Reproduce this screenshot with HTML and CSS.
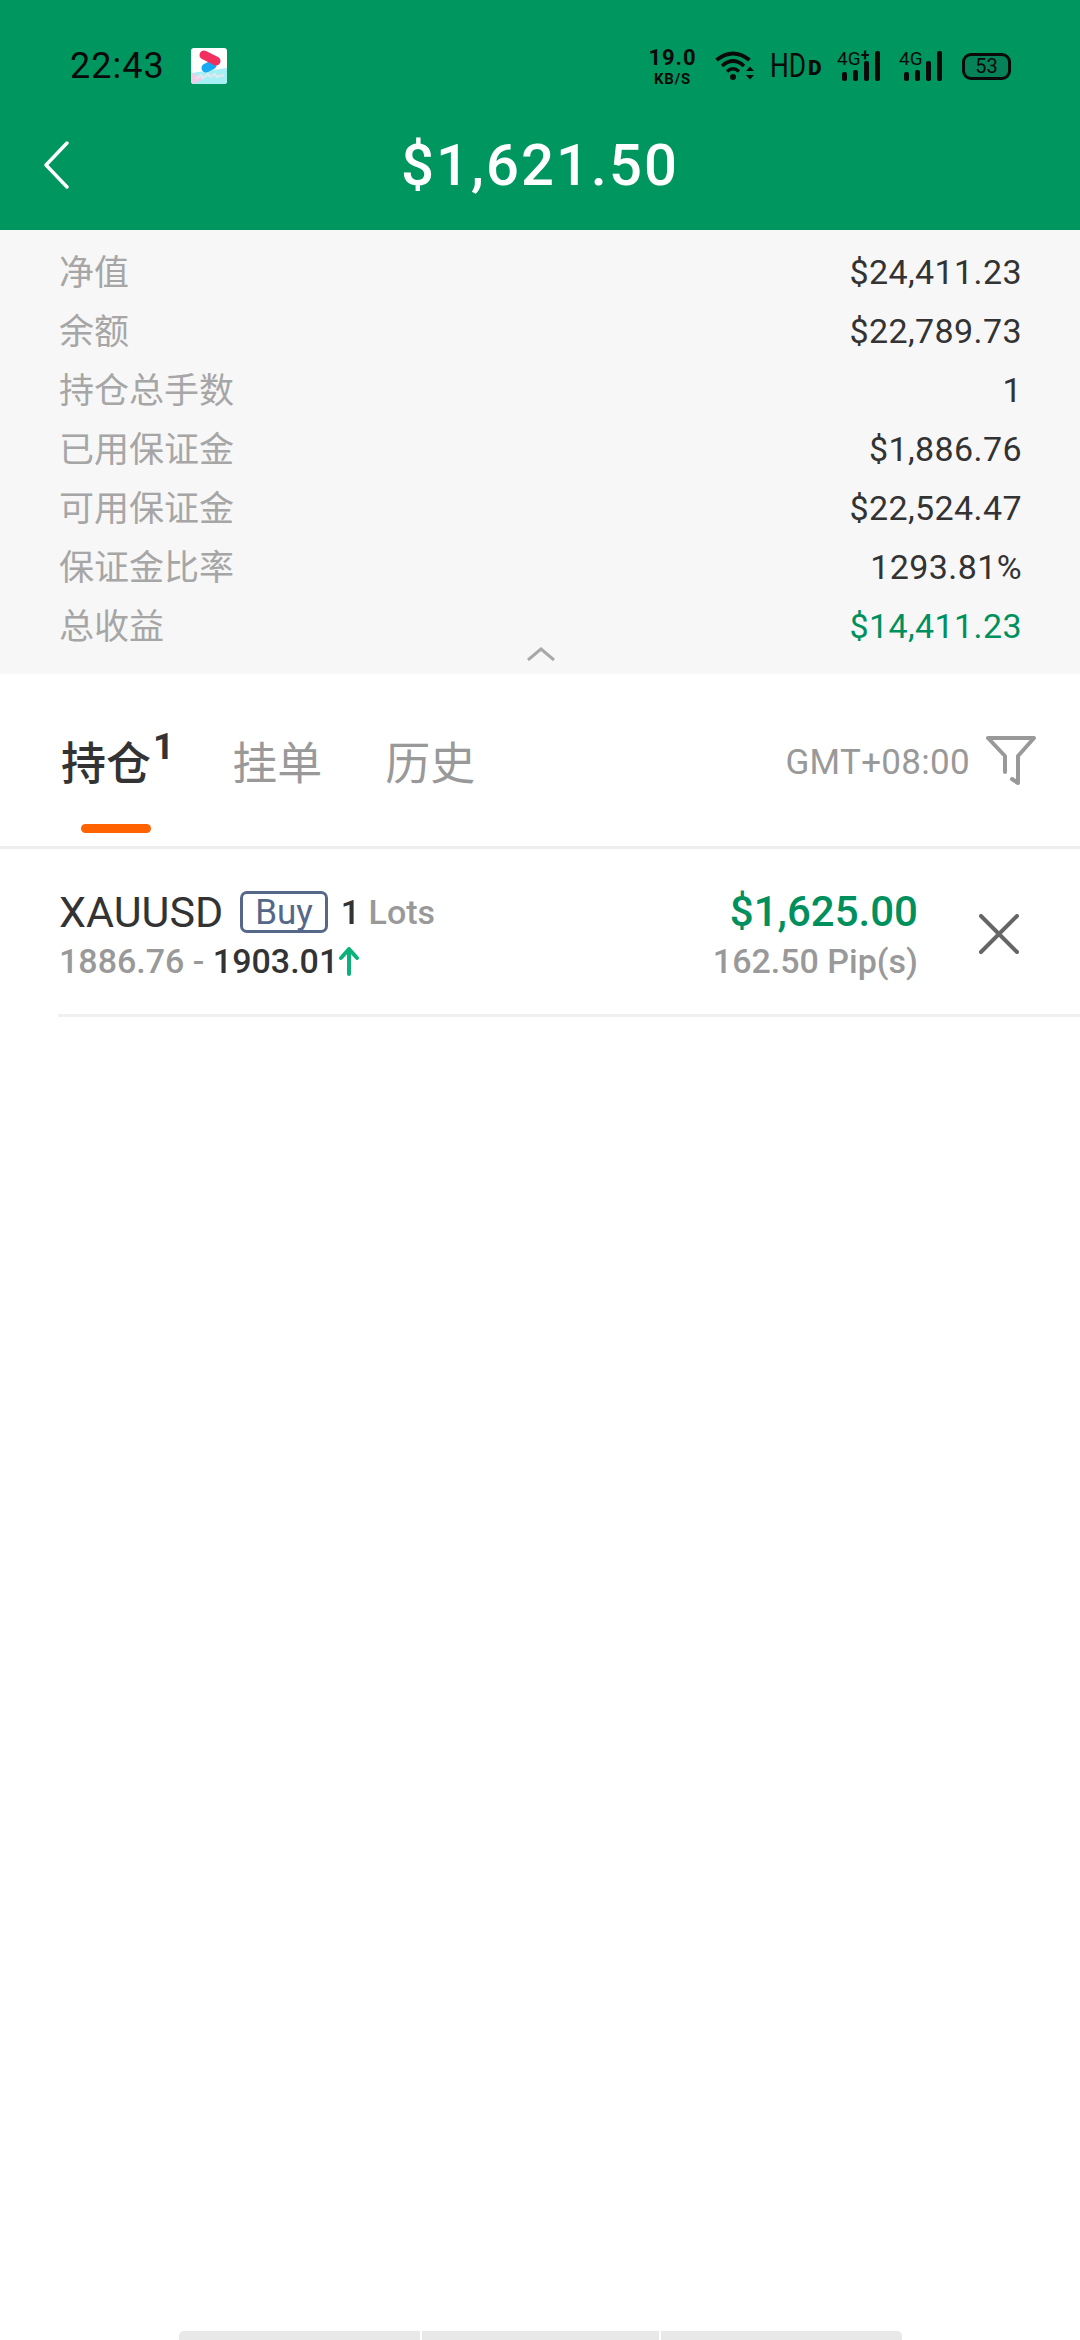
FILE: index.html
```html
<!DOCTYPE html>
<html lang="zh-CN">
<head>
  <meta charset="UTF-8">
  <title>持仓</title>
  <link rel="stylesheet" href="styles.css">
</head>
<body>
  <header class="header">
    <div class="status-bar">
      <span class="time">22:43</span>
      <svg class="app-icon" width="36" height="36" viewBox="0 0 36 36">
        <rect width="36" height="36" rx="3" fill="#fff"/>
        <path d="M0 25 L36 20 V33 Q36 36 33 36 H3 Q0 36 0 33Z" fill="#a6f0f5"/>
        <path d="M0 24 L12 31 L2 36 L0 34Z" fill="#f6cbe8"/>
        <path d="M15 20 L21 17" fill="none" stroke="#17a9f2" stroke-width="9" stroke-linecap="round"/>
        <path d="M13 7 L25 13" fill="none" stroke="#f2305f" stroke-width="9" stroke-linecap="round"/>
        <path d="M5 31 L10 27 L12 30 L17 26 L19 29 L24 26 L26 29 L33 27" fill="none" stroke="#e4e8ee" stroke-width="2"/>
      </svg>
      <div class="status-icons">
        <div class="speed"><b>19.0</b><span>KB/S</span></div>
        <svg class="wifi" width="39" height="30" viewBox="0 0 39 30">
          <path d="M1.500 9 Q18 -4 34.500 9" fill="none" stroke="#0a0a0a" stroke-width="4"/>
          <path d="M7 15 Q18 5 29 15" fill="none" stroke="#0a0a0a" stroke-width="3.600"/>
          <path d="M12 20.500 Q18 15 24 20.500" fill="none" stroke="#0a0a0a" stroke-width="3.400"/>
          <circle cx="18" cy="26" r="3" fill="#0a0a0a"/>
          <path d="M31 20 L35 15.500 L39 20Z M31 24 L35 28.500 L39 24Z" fill="#0a0a0a"/>
        </svg>
        <div class="hd"><span class="hd-main">HD</span><i class="hd-mark">D</i></div>
        <div class="signal">
          <span class="net">4G<sup>+</sup></span>
          <div class="bars"><i class="b1"></i><i class="b2"></i><i class="b3"></i><i class="b4"></i></div>
        </div>
        <div class="signal">
          <span class="net">4G</span>
          <div class="bars"><i class="b1"></i><i class="b2"></i><i class="b3"></i><i class="b4"></i></div>
        </div>
        <div class="battery"><span>53</span></div>
      </div>
    </div>
    <div class="toolbar">
      <svg class="back" width="26" height="48" viewBox="0 0 26 48">
        <path d="M24 2 L3 24 L24 46" fill="none" stroke="#fff" stroke-width="3.400" stroke-linecap="round" stroke-linejoin="round"/>
      </svg>
      <h1 class="title">$1,621.50</h1>
    </div>
  </header>

  <section class="summary">
    <div class="summary-row"><span>净值</span><b>$24,411.23</b></div>
    <div class="summary-row"><span>余额</span><b>$22,789.73</b></div>
    <div class="summary-row"><span>持仓总手数</span><b>1</b></div>
    <div class="summary-row"><span>已用保证金</span><b>$1,886.76</b></div>
    <div class="summary-row"><span>可用保证金</span><b>$22,524.47</b></div>
    <div class="summary-row"><span>保证金比率</span><b>1293.81%</b></div>
    <div class="summary-row"><span>总收益</span><b class="green">$14,411.23</b></div>
    <svg class="collapse" width="28" height="14" viewBox="0 0 28 14">
      <path d="M1 13 L14 2 L27 13" fill="none" stroke="#a8a8a8" stroke-width="3"/>
    </svg>
  </section>

  <nav class="tabs">
    <div class="tab active">持仓<sup>1</sup></div>
    <div class="tab">挂单</div>
    <div class="tab">历史</div>
    <div class="tabs-right">
      <span class="timezone">GMT+08:00</span>
      <svg class="filter" width="50" height="52" viewBox="0 0 50 52">
        <path d="M2 3 H48 L32 21 V48 L26 44 M2 3 L19 21 V37" fill="none" stroke="#999" stroke-width="4" stroke-linecap="round" stroke-linejoin="round"/>
      </svg>
    </div>
  </nav>

  <main class="list">
    <div class="order">
      <div class="order-left">
        <div class="order-top">
          <span class="symbol">XAUUSD</span>
          <span class="side">Buy</span>
          <span class="lots"><b>1</b> Lots</span>
        </div>
        <div class="order-price">
          <span>1886.76 - </span><b>1903.01</b>
          <svg class="up" width="20" height="30" viewBox="0 0 20 30">
            <path d="M10 28 V3 M2 12 L10 3 L18 12" fill="none" stroke="#0db27a" stroke-width="4" stroke-linecap="round" stroke-linejoin="round"/>
          </svg>
        </div>
      </div>
      <div class="order-right">
        <div class="profit">$1,625.00</div>
        <div class="pips">162.50 Pip(s)</div>
      </div>
      <svg class="close" width="40" height="40" viewBox="0 0 40 40">
        <path d="M2 2 L38 38 M38 2 L2 38" fill="none" stroke="#666" stroke-width="4" stroke-linecap="round"/>
      </svg>
    </div>
  </main>

  <div class="bottom-bars">
    <i class="seg seg-left"></i>
    <i class="seg seg-mid"></i>
    <i class="seg seg-right"></i>
  </div>
</body>
</html>
```

FILE: styles.css
```css
* {
  margin: 0;
  padding: 0;
  box-sizing: border-box;
}

body {
  width: 1080px;
  height: 2340px;
  display: flex;
  flex-direction: column;
  background-color: #fff;
  font-family: Roboto, "Noto Sans CJK SC", sans-serif;
  overflow: hidden;
}

.header {
  background-color: #00965f;
  height: 230px;
}

.status-bar {
  height: 100px;
  padding: 32px 69px 0 70px;
  display: flex;
  align-items: center;
  color: #0a0a0a;
}

.time {
  font-size: 36px;
  letter-spacing: 1px;
}

.app-icon {
  margin-left: 26px;
}

.status-icons {
  margin-left: auto;
  display: flex;
  align-items: center;
}

.speed {
  display: flex;
  flex-direction: column;
  align-items: center;
  width: 47px;
}

.speed b {
  font-size: 22px;
  line-height: 22px;
  letter-spacing: 1px;
}

.speed span {
  font-size: 15px;
  line-height: 14px;
  font-weight: 700;
  letter-spacing: 0.800px;
  margin-top: 3px;
}

.wifi {
  margin-left: 19px;
}

.hd {
  margin-left: 16px;
  width: 48px;
  display: flex;
  align-items: flex-end;
  line-height: 32px;
}

.hd-main {
  width: 38px;
  font-size: 33px;
  transform: scaleX(0.8);
  transform-origin: left;
}

.hd-mark {
  font-style: normal;
  font-weight: 900;
  font-size: 21px;
  line-height: 27px;
}

.signal {
  position: relative;
  width: 38px;
  height: 30px;
  margin-left: 24px;
}

.net {
  position: absolute;
  left: -5px;
  top: -2px;
  font-size: 19px;
  line-height: 20px;
  white-space: nowrap;
}

.net sup {
  position: absolute;
  top: -3px;
  font-size: 16px;
  font-weight: 700;
}

.bars {
  height: 30px;
  display: flex;
  align-items: flex-end;
  gap: 6px;
}

.bars i {
  width: 5px;
  border-radius: 2px;
  background-color: #0a0a0a;
}

.bars .b1 { height: 9px; }
.bars .b2 { height: 11px; }
.bars .b3 { height: 20px; }
.bars .b4 { height: 30px; }

.battery {
  width: 49px;
  height: 27px;
  margin-left: 20px;
  border: 3px solid #0a0a0a;
  border-radius: 9px;
  background-color: #058258;
  display: flex;
  align-items: center;
  justify-content: center;
  font-size: 20px;
}

.toolbar {
  height: 130px;
  position: relative;
  display: flex;
  align-items: center;
  justify-content: center;
}

.back {
  position: absolute;
  left: 43px;
  top: 41px;
}

.title {
  color: #fff;
  font-size: 58px;
  font-weight: 500;
  letter-spacing: 2px;
}

.summary {
  height: 444px;
  padding: 10px 58px 0 59px;
  background-color: #f7f7f7;
  position: relative;
}

.summary-row {
  height: 59px;
  display: flex;
  align-items: center;
  justify-content: space-between;
  font-size: 35px;
  color: #a6a6a6;
}

.summary-row b {
  font-weight: 400;
  font-size: 34px;
  letter-spacing: 0.400px;
  color: #333;
  padding-top: 4px;
}

.summary-row b.green {
  color: #00905e;
}

.collapse {
  position: absolute;
  left: 527px;
  bottom: 13px;
}

.tabs {
  height: 175px;
  padding: 0 44px 0 61px;
  display: flex;
  align-items: center;
  border-bottom: 3px solid #eee;
}

.tab {
  font-size: 45px;
  color: #999;
  margin-right: 63px;
}

.tab.active {
  position: relative;
  font-weight: 500;
  color: #333;
  margin-right: 58px;
}

.tab.active sup {
  font-family: Roboto, sans-serif;
  font-size: 37px;
  font-weight: 700;
  margin-left: 2px;
  line-height: 0;
  position: relative;
  top: -5px;
}

.tab.active::after {
  content: "";
  position: absolute;
  left: 20px;
  bottom: -40px;
  width: 70px;
  height: 9px;
  border-radius: 5px;
  background-color: #ff6200;
}

.tabs-right {
  margin-left: auto;
  display: flex;
  align-items: center;
}

.timezone {
  font-size: 35px;
  letter-spacing: 0.300px;
  color: #999;
  margin-top: 5px;
}

.filter {
  margin-left: 16px;
  margin-top: 2px;
}

.list {
  flex: 1;
}

.order {
  margin-left: 58px;
  height: 168px;
  padding-top: 10px;
  display: flex;
  align-items: center;
  border-bottom: 3px solid #f0f0f0;
}

.order-left {
  flex: 1;
  display: flex;
  flex-direction: column;
  gap: 3px;
}

.order-top {
  display: flex;
  align-items: center;
  height: 46px;
}

.symbol {
  font-size: 43px;
  color: #333;
  margin-left: 1px;
}

.side {
  margin-left: 17px;
  padding: 0 12px;
  height: 42px;
  line-height: 38px;
  border: 3px solid #56688a;
  border-radius: 7px;
  font-size: 35px;
  color: #56688a;
}

.lots {
  margin-left: 13px;
  font-size: 34px;
  font-weight: 500;
  color: #999;
}

.lots b {
  font-weight: 500;
  color: #333;
}

.order-price {
  display: flex;
  align-items: center;
  height: 46px;
  margin-left: 1px;
  font-size: 34px;
  font-weight: 500;
  color: #999;
}

.order-price span {
  white-space: pre;
}

.order-price b {
  font-weight: 500;
  color: #333;
}

.up {
  margin-left: 1px;
}

.order-right {
  display: flex;
  flex-direction: column;
  align-items: flex-end;
  gap: 3px;
}

.profit {
  font-size: 42px;
  line-height: 46px;
  font-weight: 500;
  color: #00905e;
}

.pips {
  font-size: 34px;
  line-height: 46px;
  font-weight: 500;
  color: #999;
}

.close {
  margin: -5px 61px 0;
}

.bottom-bars {
  height: 9px;
  display: flex;
  justify-content: center;
  gap: 2px;
}

.seg {
  height: 9px;
  background-color: #e8e8e8;
}

.seg-left {
  width: 241px;
  border-top-left-radius: 5px;
}

.seg-mid {
  width: 237px;
}

.seg-right {
  width: 241px;
  border-top-right-radius: 5px;
}
```
